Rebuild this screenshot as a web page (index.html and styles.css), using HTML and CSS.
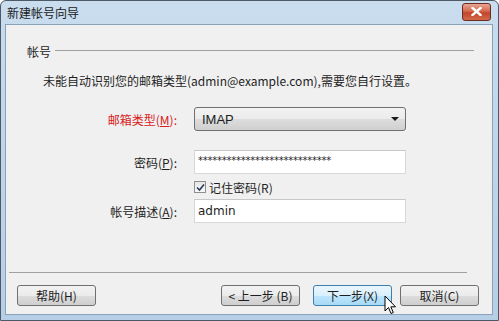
FILE: index.html
```html
<!DOCTYPE html>
<html lang="zh-CN">
<head>
    <meta charset="UTF-8">
    <title>新建帐号向导</title>
    <link rel="stylesheet" href="styles.css">
</head>
<body>
    <div class="window">
        <!-- Title bar -->
        <div class="titlebar">
            <span class="title">新建帐号向导</span>
            <button class="close-btn" title="关闭">
                <svg width="11" height="9" viewBox="0 0 11 9">
                    <path d="M1.5 1 L9.5 8 M9.5 1 L1.5 8" stroke="#fff" stroke-width="2.4" stroke-linecap="square"/>
                </svg>
            </button>
        </div>

        <div class="content">
            <!-- Group header -->
            <div class="group-head">
                <span>帐号</span>
                <div class="group-line"></div>
            </div>

            <p class="hint">未能自动识别您的邮箱类型(admin@example.com),需要您自行设置。</p>

            <div class="form">
                <label class="lbl red">邮箱类型(<u>M</u>):</label>
                <div class="select">
                    <span>IMAP</span>
                    <span class="arrow"></span>
                </div>

                <label class="lbl pw-lbl">密码(<u>P</u>):</label>
                <div class="input pw-input">****************************</div>

                <div class="check-row">
                    <span class="checkbox">
                        <svg width="9" height="9" viewBox="0 0 9 9">
                            <path d="M1 4.5 L3.5 7 L8 1.5" stroke="#2a3a5a" stroke-width="1.6" fill="none"/>
                        </svg>
                    </span>
                    <span>记住密码(R)</span>
                </div>

                <label class="lbl">帐号描述(<u>A</u>):</label>
                <div class="input">admin</div>
            </div>

            <div class="spacer"></div>

            <div class="sep"></div>

            <div class="buttons">
                <button class="btn">帮助(H)</button>
                <div class="btn-group">
                    <button class="btn">&lt; 上一步 (B)</button>
                    <button class="btn hover">下一步(X)
                        <svg class="cursor" width="13" height="20" viewBox="0 0 13 20">
                            <path d="M1 1 L1 16 L4.5 12.5 L7 18.5 L9.3 17.5 L6.8 11.8 L11.5 11.8 Z" fill="#fff" stroke="#000" stroke-width="1"/>
                        </svg>
                    </button>
                    <button class="btn">取消(C)</button>
                </div>
            </div>
        </div>
    </div>
</body>
</html>
```

FILE: styles.css
```css
* {
    margin: 0;
    padding: 0;
    box-sizing: border-box;
}

body {
    font-family: "Noto Sans CJK SC", "Liberation Sans", sans-serif;
    font-size: 12px;
    color: #1e1e1e;
    background: #fff;
    width: 499px;
    height: 321px;
    overflow: hidden;
}

.window {
    width: 499px;
    height: 321px;
    border: 1px solid #4c5966;
    border-radius: 6px 6px 0 0;
    background: linear-gradient(to bottom, #c9ddef 0%, #c0d6ea 40%, #b7cfe6 100%);
    padding: 0 5px 5px 4px;
    display: flex;
    flex-direction: column;
}

/* Title bar */
.titlebar {
    height: 23px;
    display: flex;
    align-items: center;
    justify-content: space-between;
    padding-left: 2px;
}

.title {
    font-size: 12px;
    color: #1a1a1a;
}

.close-btn {
    width: 29px;
    height: 18px;
    margin-top: -2px;
    margin-right: 2px;
    border: 1px solid #6b2a22;
    border-radius: 3px;
    background: linear-gradient(to bottom, #e8a593 0%, #d4694f 45%, #c1452b 55%, #d2694a 100%);
    display: flex;
    align-items: center;
    justify-content: center;
}

/* Main panel */
.content {
    flex: 1;
    background: #f0f0f0;
    border: 1px solid #8aa1b9;
    display: flex;
    flex-direction: column;
    padding: 0 0 8px 0;
}

.group-head {
    display: flex;
    align-items: center;
    margin-top: 18px;
    padding-left: 21px;
    padding-right: 18px;
    gap: 4px;
}

.group-line {
    flex: 1;
    height: 1px;
    background: #a0a0a0;
    margin-top: -2px;
}

.hint {
    margin-top: 12px;
    padding-left: 37px;
}

.form {
    display: grid;
    grid-template-columns: 188px 212px;
    margin-top: 18px;
    align-items: center;
}

.lbl {
    text-align: right;
    padding-right: 17px;
}

.lbl u {
    text-decoration: underline;
}

.red {
    color: #d9211b;
}

.select {
    height: 24px;
    border: 1px solid #707070;
    border-radius: 3px;
    background: linear-gradient(to bottom, #f3f3f3 0%, #ebebeb 50%, #dddddd 51%, #cfcfcf 100%);
    display: flex;
    align-items: center;
    justify-content: space-between;
    padding: 0 6px 0 7px;
    font-family: "Liberation Sans", sans-serif;
    font-size: 13px;
}

.arrow {
    width: 0;
    height: 0;
    border-left: 4px solid transparent;
    border-right: 4px solid transparent;
    border-top: 4px solid #1a1a1a;
}

.input {
    height: 24px;
    background: #fff;
    border: 1px solid #d8d8d8;
    border-top-color: #c8c8c8;
    display: flex;
    align-items: center;
    padding-left: 3px;
    font-family: "DejaVu Sans", sans-serif;
    font-size: 12px;
}

.pw-lbl,
.pw-input {
    margin-top: 19px;
}

.pw-input {
    font-size: 10px;
    letter-spacing: -0.25px;
    padding-left: 3px;
    padding-bottom: 4px;
}

.check-row {
    grid-column: 2;
    display: flex;
    align-items: center;
    gap: 3px;
    height: 25px;
    padding-top: 1px;
}

.checkbox {
    width: 12px;
    height: 12px;
    border: 1px solid #8f8f8f;
    background: linear-gradient(to bottom, #e6e6e6, #fafafa);
    display: flex;
    align-items: center;
    justify-content: center;
}

.spacer {
    flex: 1;
}

.sep {
    height: 1px;
    background: #a0a0a0;
    margin: 0 25px 0 3px;
}

.buttons {
    display: flex;
    justify-content: space-between;
    margin-top: 12px;
    padding-left: 11px;
    padding-right: 13px;
}

.btn-group {
    display: flex;
    gap: 13px;
}

.btn-group .btn:last-child {
    margin-left: -5px;
}

.btn {
    width: 79px;
    height: 21px;
    font-family: "Noto Sans CJK SC", "Liberation Sans", sans-serif;
    font-size: 12px;
    color: #1e1e1e;
    border: 1px solid #707070;
    border-radius: 3px;
    background: linear-gradient(to bottom, #f2f2f2 0%, #ebebeb 50%, #dddddd 51%, #cfcfcf 100%);
    position: relative;
}

.btn.hover {
    border-color: #3c7fb1;
    background: linear-gradient(to bottom, #eaf6fd 0%, #d9f0fc 50%, #bee6fd 51%, #a7d9f5 100%);
}

.cursor {
    position: absolute;
    left: 70px;
    top: 9px;
}
```
